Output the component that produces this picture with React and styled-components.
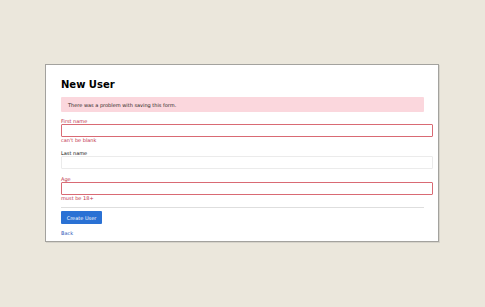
import React from 'react'
import styled, { createGlobalStyle } from 'styled-components'

const GlobalStyle = createGlobalStyle`
  html, body {
    margin: 0;
    padding: 0;
    background: #ebe7dc;
    font-family: "DejaVu Sans", Verdana, sans-serif;
  }
`

function Field(props) {
    return (
        <FieldWrap gap={props.gap}>
            <Label error={props.error}>{props.label}</Label>
            <Input error={props.error} />
            {props.error && <ErrorText>{props.error}</ErrorText>}
        </FieldWrap>
    )
}

function App() {
    return (
        <Page>
            <GlobalStyle />
            <Card>
                <Title>New User</Title>
                <Alert>There was a problem with saving this form.</Alert>
                <Field label="First name" error="can't be blank" />
                <Field label="Last name" gap={6} />
                <Field label="Age" error="must be 18+" gap={7} />
                <Rule />
                <Button>Create User</Button>
                <BackLink href="#">Back</BackLink>
            </Card>
        </Page>
    )
}

export default App

const Page = styled.div`
padding:64px 0 0 45px;
height:307px;
box-sizing:border-box;`

const Card = styled.div`
width:394px;
height:178px;
box-sizing:border-box;
background:#fff;
border:1px solid #a3a29e;
box-shadow:1px 1px 0 #d6d3ca;
padding:14px 14px 0 15px;
display:flex;
flex-direction:column;
align-items:flex-start;`

const Title = styled.h1`
margin:0;
font-size:10px;
line-height:12px;
font-weight:bold;
color:#000;`

const Alert = styled.div`
margin-top:6px;
align-self:stretch;
height:15px;
box-sizing:border-box;
padding:0 7px;
display:flex;
align-items:center;
background:#fbd7dd;
border-radius:1px;
font-size:5px;
color:#2a1f20;`

const FieldWrap = styled.div`
align-self:stretch;
display:flex;
flex-direction:column;
margin-top:${props => props.gap ? props.gap : 6}px;`

const Label = styled.label`
font-size:5px;
line-height:6px;
height:6px;
color:${props => props.error ? '#c0304a' : '#111'};`

const Input = styled.input`
width:calc(100% + 9px);
height:13px;
box-sizing:border-box;
margin:0;
padding:0 3px;
border:1px solid ${props => props.error ? '#d96a74' : '#ebebeb'};
border-radius:1px;
background:#fff;
outline:none;`

const ErrorText = styled.div`
font-size:5px;
line-height:7px;
color:#c0304a;`

const Rule = styled.div`
align-self:stretch;
margin-top:5px;
height:1px;
background:#dedede;`

const Button = styled.button`
margin-top:3px;
width:41px;
height:13px;
padding:0;
border:none;
border-radius:1px;
background:#2a71d4;
color:#fff;
font-family:"DejaVu Sans", Verdana, sans-serif;
font-size:5px;
cursor:pointer;`

const BackLink = styled.a`
margin-top:6px;
font-size:5px;
line-height:6px;
color:#2d56b8;
text-decoration:none;`
